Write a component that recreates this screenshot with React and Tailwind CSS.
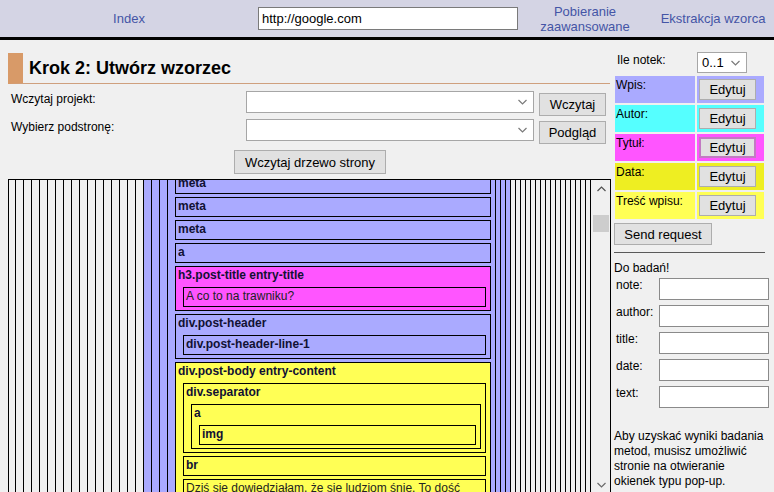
import React from "react";

const BLUE = "bg-[#aaaaff]";
const PINK = "bg-[#ff55ff]";
const YELLOW = "bg-[#ffff55]";

function Chevron({ up = false, color = "#6d6d6d" }) {
  return (
    <svg width="9" height="6" viewBox="0 0 9 6" className="block">
      <path
        d={up ? "M0.5 5 L4.5 1 L8.5 5" : "M0.5 1 L4.5 5 L8.5 1"}
        fill="none"
        stroke={color}
        strokeWidth="1.2"
      />
    </svg>
  );
}

function Btn({ children, className = "" }) {
  return (
    <button
      className={`flex items-center justify-center bg-[#e1e1e1] border border-[#adadad] text-[13px] leading-none text-black ${className}`}
    >
      {children}
    </button>
  );
}

function Select({ className = "", value = "" }) {
  return (
    <div
      className={`flex items-center justify-between bg-white border border-[#a6a6a6] pl-[4px] pr-[6px] text-[13px] ${className}`}
    >
      <span>{value}</span>
      <Chevron color="#7a7a7a" />
    </div>
  );
}

// jeden element drzewa strony
function Node({ label, bg = BLUE, bold = true, children }) {
  return (
    <div className={`border border-black px-px pt-px ${children ? "pb-[3px]" : "pb-[2px]"} ${bg}`}>
      <div className={`pl-px leading-[15px] whitespace-nowrap ${bold ? "font-bold text-[#111133]" : "font-normal text-[#222]"}`}>
        {label}
      </div>
      {children && (
        <div className="ml-[6px] mr-[3px] mt-[4px] flex flex-col gap-[3px]">{children}</div>
      )}
    </div>
  );
}

function Tree() {
  let inner = (
    <div className="-mt-[6px] flex flex-col gap-[3px]">
      <Node label="meta" />
      <Node label="meta" />
      <Node label="meta" />
      <Node label="a" />
      <Node label="h3.post-title entry-title" bg={PINK}>
        <Node label="A co to na trawniku?" bg={PINK} bold={false} />
      </Node>
      <Node label="div.post-header">
        <Node label="div.post-header-line-1" />
      </Node>
      <Node label="div.post-body entry-content" bg={YELLOW}>
        <Node label="div.separator" bg={YELLOW}>
          <Node label="a" bg={YELLOW}>
            <Node label="img" bg={YELLOW} />
          </Node>
        </Node>
        <Node label="br" bg={YELLOW} />
        <Node
          label="Dziś się dowiedziałam, że się ludziom śnie. To dość"
          bg={YELLOW}
          bold={false}
        />
      </Node>
    </div>
  );
  // zagnieżdżone divy powyżej (przewinięte)
  for (let i = 0; i < 20; i++) {
    inner = (
      <div className={i < 4 ? "border-x border-black px-px bg-[#aaaaff] min-h-[340px]" : "border-x border-black px-px min-h-[340px]"}>
        <div className="ml-[6px] mr-[3px]">{inner}</div>
      </div>
    );
  }
  return inner;
}

export default function App() {
  return (
    <div className="w-[774px] h-[492px] overflow-hidden bg-[#f0f0f0] text-[12px] text-black font-['Liberation_Sans',Arial,sans-serif]">
      {/* nawigacja */}
      <div className="flex items-center h-[40px] bg-[#d4d4e4] border-b-[3px] border-black text-[13px] text-[#4455a6]">
        <div className="w-[258px] text-center">Index</div>
        <div className="w-[260px] h-[23px] bg-white border border-[#7a7a7a] flex items-center pl-[3px] text-[13px] text-black">
          http://google.com
        </div>
        <div className="w-[134px] text-center leading-[15px]">
          Pobieranie
          <br />
          zaawansowane
        </div>
        <div className="flex-1 text-center">Ekstrakcja wzorca</div>
      </div>

      <div className="flex">
        {/* lewa kolumna */}
        <div className="w-[612px] pl-[8px]">
          <div className="mt-[13px] h-[31px] w-[602px] border-l-[15px] border-l-[#d89a68] border-b border-b-[#cfa07e] pl-[6px] text-[18px] font-bold leading-[31px]">
            Krok 2: Utwórz wzorzec
          </div>

          <div className="mt-[7px] flex items-start">
            <div className="w-[238px] pl-[3px] leading-[14px] pt-px">Wczytaj projekt:</div>
            <Select className="w-[288px] h-[22px]" />
            <Btn className="ml-[5px] mt-[2px] w-[67px] h-[23px]">Wczytaj</Btn>
          </div>
          <div className="mt-[3px] flex items-start">
            <div className="w-[238px] pl-[3px] leading-[14px] pt-px">Wybierz podstronę:</div>
            <Select className="w-[288px] h-[22px]" />
            <Btn className="ml-[5px] mt-[2px] w-[67px] h-[23px]">Podgląd</Btn>
          </div>
          <div className="mt-[6px] flex justify-center">
            <Btn className="w-[152px] h-[24px]">Wczytaj drzewo strony</Btn>
          </div>

          {/* drzewo strony */}
          <div className="mt-[5px] w-[603px] border border-black flex">
            <div className="w-[584px] h-[313px] overflow-hidden pl-[6px] pr-[2px]">
              <Tree />
            </div>
            <div className="w-[17px] h-[313px] flex flex-col">
              <div className="h-[17px] flex items-center justify-center">
                <Chevron up color="#505050" />
              </div>
              <div className="flex-1">
                <div className="mt-[18px] h-[17px] w-[16px] bg-[#cdcdcd]" />
              </div>
              <div className="h-[17px] flex items-center justify-center">
                <Chevron color="#6a6a6a" />
              </div>
            </div>
          </div>
        </div>

        {/* prawa kolumna */}
        <div className="flex-1 pt-[12px]">
          <div className="flex items-start">
            <div className="w-[85px] pl-[5px] pt-px leading-[14px]">Ile notek:</div>
            <Select className="w-[50px] h-[21px]" value="0..1" />
          </div>

          <div className="mt-[3px] ml-[3px] grid grid-cols-[80px_67px] gap-[2px] leading-[14px]">
            <div className={`h-[27px] pt-[2px] pl-px ${BLUE}`}>Wpis:</div>
            <div className={`h-[27px] pl-[2px] pt-[3px] ${BLUE}`}>
              <Btn className="w-[57px] h-[21px]">Edytuj</Btn>
            </div>
            <div className="h-[27px] pt-[2px] pl-px bg-[#55ffff]">Autor:</div>
            <div className="h-[27px] pl-[2px] pt-[3px] bg-[#55ffff]">
              <Btn className="w-[57px] h-[21px]">Edytuj</Btn>
            </div>
            <div className={`h-[27px] pt-[2px] pl-px ${PINK}`}>Tytuł:</div>
            <div className={`h-[27px] pl-[2px] pt-[3px] ${PINK}`}>
              <Btn className="w-[57px] h-[21px] !border-[#c27ac2] !border-2">Edytuj</Btn>
            </div>
            <div className="h-[27px] pt-[2px] pl-px bg-[#eeee22]">Data:</div>
            <div className="h-[27px] pl-[2px] pt-[3px] bg-[#eeee22]">
              <Btn className="w-[57px] h-[21px]">Edytuj</Btn>
            </div>
            <div className={`h-[27px] pt-[2px] pl-px ${YELLOW}`}>Treść wpisu:</div>
            <div className={`h-[27px] pl-[2px] pt-[3px] ${YELLOW}`}>
              <Btn className="w-[57px] h-[21px]">Edytuj</Btn>
            </div>
          </div>

          <Btn className="mt-[4px] ml-[2px] w-[98px] h-[22px]">Send request</Btn>

          <div className="mt-[7px] ml-[2px] w-[151px] border-t border-[#5a5a5a]" />

          <div className="mt-[8px] ml-[2px] leading-[14px]">Do badań!</div>
          <div className="mt-[3px] flex flex-col gap-[5px]">
            {["note:", "author:", "title:", "date:", "text:"].map((l) => (
              <div key={l} className="flex items-start">
                <div className="w-[47px] pl-[4px] pt-0 leading-[14px]">{l}</div>
                <div className="w-[110px] h-[22px] bg-white border border-[#8a8a8a]" />
              </div>
            ))}
          </div>

          <p className="mt-[21px] ml-[2px] pr-[8px] leading-[15px]">
            Aby uzyskać wyniki badania metod, musisz umożliwić stronie na otwieranie okienek typu pop-up.
          </p>
        </div>
      </div>
    </div>
  );
}
